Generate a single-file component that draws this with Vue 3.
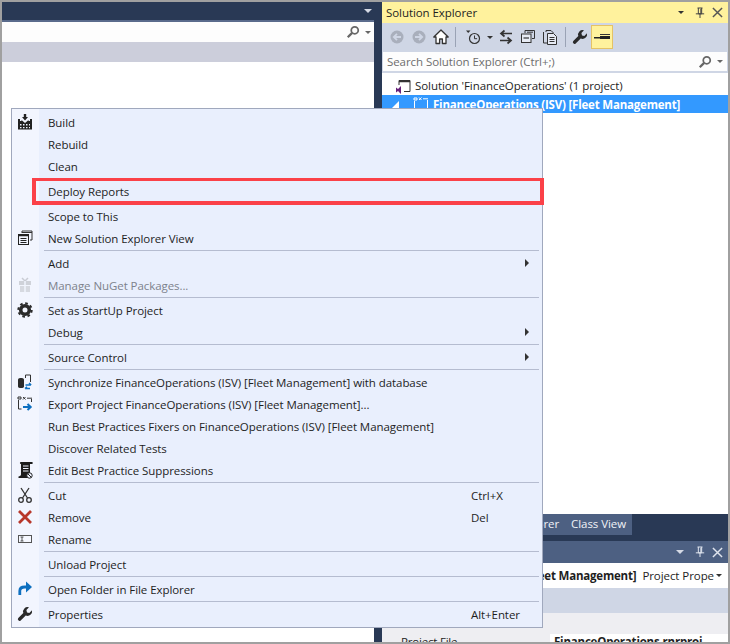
<template>
  <div class="page">
    <div class="left-pane">
      <div class="doc-bar"><span class="tri light"></span></div>
      <div class="doc-search">
        <svg class="glass" viewBox="0 0 16 16"><circle cx="10" cy="6" r="4" fill="none" stroke="#666" stroke-width="2" /><path d="M7 9l-5 5" stroke="#666" stroke-width="2.6" /></svg>
        <span class="tri"></span>
      </div>
      <div class="doc-strip"></div>
      <div class="doc-body"></div>
    </div>

    <div class="right-pane">
      <div class="title-bar">
        <span class="title-text">Solution Explorer</span>
        <span class="tri dark"></span>
        <svg class="pin" viewBox="0 0 12 14"><path d="M3 1h6M4 1v7h4V1M1 8h10M6 8v5M7 2v6" fill="none" stroke="#444" stroke-width="1.2" /></svg>
        <svg class="close" viewBox="0 0 12 12"><path d="M1 1l10 10M11 1L1 11" stroke="#555" stroke-width="1.6" /></svg>
      </div>

      <div class="toolbar">
        <span class="tool">
          <svg viewBox="0 0 16 16"><circle cx="8" cy="8" r="6.5" fill="#a9afbc" /><path d="M12 8H5M8 4.8L4.8 8 8 11.2" fill="none" stroke="#cfd6e5" stroke-width="1.8" /></svg>
        </span>
        <span class="tool">
          <svg viewBox="0 0 16 16"><circle cx="8" cy="8" r="6.5" fill="#a9afbc" /><path d="M4 8h7M8 4.8L11.2 8 8 11.2" fill="none" stroke="#cfd6e5" stroke-width="1.8" /></svg>
        </span>
        <span class="tool">
          <svg viewBox="0 0 16 16"><path d="M8 1L0.8 8h2.2v6.5h3.6v-4.5h2.8v4.5H13V8h2.2z" fill="#fff" stroke="#333" stroke-width="1.3" stroke-linejoin="round" /></svg>
        </span>
        <span class="tool-sep first"></span>
        <span class="tool">
          <svg viewBox="0 0 16 16"><circle cx="9.5" cy="9.5" r="5" fill="none" stroke="#333" stroke-width="1.2" /><path d="M9.5 6.5v3.2h2.6" fill="none" stroke="#333" /><path d="M1 1.5h4.5L3.2 4z" fill="#333" /></svg>
        </span>
        <span class="tool small"><span class="tri dark"></span></span>
        <span class="tool">
          <svg viewBox="0 0 16 16"><path d="M14 4.5H4M6.5 1.5L3 4.5l3.5 3M2 11.5h10M9.5 8.500l3.500 3-3.500 3" fill="none" stroke="#333" stroke-width="1.7" /></svg>
        </span>
        <span class="tool">
          <svg viewBox="0 0 16 16"><path d="M5 4V1.500h9.500v8H12M7 3.200h6" fill="none" stroke="#333" /><rect x="1.500" y="5" width="9.500" height="8.500" fill="#e7ebf4" stroke="#333" /><path d="M3.500 9h5.500" stroke="#333" stroke-width="1.200" /></svg>
        </span>
        <span class="tool">
          <svg viewBox="0 0 16 16"><path d="M4 3V1.500h5l2.500 2.500" fill="none" stroke="#333" /><path d="M1.500 3v11h4" fill="none" stroke="#333" /><path d="M5.500 4.500h6l3 3v8h-9z" fill="#e7ebf4" stroke="#333" /><path d="M7.500 8.500h5M7.500 10.500h5M7.500 12.500h5" stroke="#333" /></svg>
        </span>
        <span class="tool-sep second"></span>
        <span class="tool">
          <svg viewBox="0 0 16 16"><path d="M15 4.300l-2.700 2.700-2.300-.6-.6-2.300L12 1.300a4.500 4.500 0 0 0-5.700 5.700L1.300 12a1.700 1.700 0 0 0 2.400 2.400l5-5A4.500 4.500 0 0 0 15 4.300z" fill="#2a2a2a" /></svg>
        </span>
        <span class="tool toggled">
          <svg viewBox="0 0 16 16"><rect x="6" y="5" width="10" height="1" fill="#333" /><rect x="6" y="7" width="10" height="3" fill="#222" /><rect x="0" y="8" width="6" height="1.500" fill="#222" /></svg>
        </span>
      </div>

      <div class="search-wrap">
        <div class="search-box">
          <span class="placeholder">Search Solution Explorer (Ctrl+;)</span>
          <svg class="glass" viewBox="0 0 16 16"><circle cx="10" cy="6" r="4" fill="none" stroke="#666" stroke-width="2" /><path d="M7 9l-5 5" stroke="#666" stroke-width="2.600" /></svg>
          <span class="tri"></span>
        </div>
      </div>

      <div class="tree">
        <div class="tree-row solution">
          <svg viewBox="0 0 16 16"><path d="M4 7V2.500h11v11H9" fill="none" stroke="#333" /><path d="M4 3.500h11" stroke="#333" stroke-width="1.500" /><path d="M1 9.500l2 1.500 3-3v8l-3-3-2 1.500z" fill="#68217a" /></svg>
          <span>Solution 'FinanceOperations' (1 project)</span>
        </div>
        <div class="tree-row project">
          <span class="expander"></span>
          <svg viewBox="0 0 16 16"><path d="M1.500 5v10h13V4" fill="none" stroke="#fff" /><path d="M1 2h3v2H1zM6 1.500l2.500 2.500M8.500 1.500L6 4M10 2.800h5" fill="none" stroke="#fff" /></svg>
          <span>FinanceOperations (ISV) [Fleet Management]</span>
        </div>
      </div>

      <div class="tab-strip">
        <span class="tab explorer">Team Explorer</span>
        <span class="tab">Class View</span>
      </div>

      <div class="props">
        <div class="props-title">
          <span class="tri light"></span>
          <svg class="pin" viewBox="0 0 12 14"><path d="M3 1h6M4 1v7h4V1M1 8h10M6 8v5M7 2v6" fill="none" stroke="#dfe4ee" stroke-width="1.200" /></svg>
          <svg class="close" viewBox="0 0 12 12"><path d="M1 1l10 10M11 1L1 11" stroke="#dfe4ee" stroke-width="1.600" /></svg>
        </div>
        <div class="props-select">
          <b>FinanceOperations (ISV) [Fleet Management]</b>
          <span class="kind">Project Prope</span>
          <span class="tri dark"></span>
        </div>
        <div class="props-strip"></div>
        <div class="props-grid">
          <span class="prop-name">Project File</span>
          <span class="prop-value">FinanceOperations.rnrproj</span>
        </div>
      </div>
    </div>

    <div class="menu">
      <template v-for="(item, key) in menuItems" :key="key">
        <div v-if="item.sep" class="sep"></div>
        <div v-else class="item" :class="{ disabled: item.disabled }">
          <span class="gutter">
            <svg v-if="item.icon === 'build'" viewBox="0 0 16 16"><path d="M6.800 0h2.400v3H11L8 6.500 5 3h1.800z" fill="#222" /><path d="M1 5h2v2h1.500v-1L8 9l3.500-3v1H13V5h2v10.500H1z" fill="#222" /><path d="M3 10h1.500v1.500H3zM6 10h1.500v1.500H6zM9 10h1.500v1.500H9zM12 10h1v1.500h-1zM3 13h1.500v1.300H3zM6 13h1.500v1.300H6zM9 13h1.500v1.300H9zM12 13h1v1.300h-1z" fill="#eef2fe" /></svg>
            <svg v-else-if="item.icon === 'views'" viewBox="0 0 16 16"><path d="M5 3V1h10v9h-2" fill="none" stroke="#333" /><path d="M5 2.500h10" stroke="#333" /><rect x="1.500" y="4.500" width="10" height="10" fill="#f2f5fe" stroke="#222" /><path d="M1.500 5.500h10" stroke="#222" stroke-width="1.500" /><path d="M3.500 8.500h6M3.500 10.500h6M3.500 12.500h6" stroke="#222" /></svg>
            <svg v-else-if="item.icon === 'gift'" viewBox="0 0 16 16"><path d="M5 1l3 3 3-3" fill="none" stroke="#c9ccd3" stroke-width="1.500" /><rect x="2" y="4" width="12" height="4" fill="#cfd2d9" /><rect x="3" y="9" width="10" height="6" fill="#d6d9e0" /><path d="M8 4v11" stroke="#f1f4fe" stroke-width="1.500" /></svg>
            <svg v-else-if="item.icon === 'gear'" viewBox="0 0 16 16"><circle cx="8" cy="8" r="4.300" fill="none" stroke="#2a2a2a" stroke-width="3.600" /><circle cx="8" cy="8" r="6.700" fill="none" stroke="#2a2a2a" stroke-width="2" stroke-dasharray="2.630 2.630" /></svg>
            <svg v-else-if="item.icon === 'sync'" viewBox="0 0 16 16"><path d="M1 5.500c0-2 6-2 6 0v7c0 2-6 2-6 0z" fill="#2a2a2a" /><path d="M8.500 4V1h5v7" fill="none" stroke="#333" /><path d="M8.500 11H14M12 9l2.200 2M8 14.500h5M10 12.800l-2 1.700" fill="none" stroke="#0e70c0" stroke-width="1.400" /></svg>
            <svg v-else-if="item.icon === 'export'" viewBox="0 0 16 16"><path d="M1.500 4v9h3M1 1h3v2H1z" fill="none" stroke="#333" /><path d="M6 1l2.500 2.500M8.500 1L6 3.500M10 2.200h5M14.500 3v3" fill="none" stroke="#333" /><path d="M6 11h7M10.500 8l3.200 3-3.200 3" fill="none" stroke="#0e70c0" stroke-width="2" /></svg>
            <svg v-else-if="item.icon === 'scroll'" class="tall" viewBox="0 0 16 18"><path d="M4 1c-1.500 0-1.500 2 0 2v10.500c0 1-1 1.500-3 2.500l1 1h9v-3h2V3h2c1 0 1-2 0-2z" fill="#1c1c1c" /><path d="M6 5h5.500M6 7.500h5.500M6 10h5.500" stroke="#eef2fe" /><circle cx="12.500" cy="14.500" r="2.700" fill="#eef2fe" stroke="#222" /><path d="M10.800 12.800l3.400 3.400" stroke="#222" /></svg>
            <svg v-else-if="item.icon === 'cut'" viewBox="0 0 16 16"><path d="M4 1l6.500 10M12 1L5.500 11" fill="none" stroke="#333" stroke-width="1.300" /><circle cx="4" cy="13" r="2.300" fill="none" stroke="#333" stroke-width="1.300" /><circle cx="12" cy="13" r="2.300" fill="none" stroke="#333" stroke-width="1.300" /></svg>
            <svg v-else-if="item.icon === 'remove'" viewBox="0 0 16 16"><path d="M2 2l12 12M14 2L2 14" stroke="#b8372a" stroke-width="2.800" /></svg>
            <svg v-else-if="item.icon === 'rename'" viewBox="0 0 16 16"><rect x="1.500" y="4.500" width="13" height="7" fill="#f6f8ff" stroke="#555" /><path d="M3.500 6h3M3.500 10h3M5 6v4" stroke="#333" stroke-width=".8" /></svg>
            <svg v-else-if="item.icon === 'open'" viewBox="0 0 16 16"><path d="M2.800 14v-4c0-2.500 2-4 5-4h3" fill="none" stroke="#0e70c0" stroke-width="2.800" /><path d="M9 0.500L15 6 9 11.500z" fill="#0e70c0" /></svg>
            <svg v-else-if="item.icon === 'wrench'" viewBox="0 0 16 16"><path d="M15 4.300l-2.700 2.700-2.300-.6-.6-2.300L12 1.300a4.500 4.500 0 0 0-5.700 5.700L1.300 12a1.700 1.700 0 0 0 2.400 2.400l5-5A4.500 4.500 0 0 0 15 4.300z" fill="#2a2a2a" /></svg>
          </span>
          <span class="label">{{ item.label }}</span>
          <span class="shortcut">{{ item.shortcut }}</span>
          <span class="sub"><i v-if="item.sub"></i></span>
          <span v-if="item.marked" class="marker"></span>
        </div>
      </template>
    </div>
  </div>
</template>

<script setup>
const project = "FinanceOperations (ISV) [Fleet Management]";

const menuItems = [
  { label: "Build", icon: "build" },
  { label: "Rebuild" },
  { label: "Clean" },
  { sep: true },
  { label: "Deploy Reports", marked: true },
  { sep: true },
  { label: "Scope to This" },
  { label: "New Solution Explorer View", icon: "views" },
  { sep: true },
  { label: "Add", sub: true },
  { label: "Manage NuGet Packages...", icon: "gift", disabled: true },
  { sep: true },
  { label: "Set as StartUp Project", icon: "gear" },
  { label: "Debug", sub: true },
  { sep: true },
  { label: "Source Control", sub: true },
  { sep: true },
  { label: `Synchronize ${project} with database`, icon: "sync" },
  { label: `Export Project ${project}...`, icon: "export" },
  { label: `Run Best Practices Fixers on ${project}` },
  { label: "Discover Related Tests" },
  { label: "Edit Best Practice Suppressions", icon: "scroll" },
  { sep: true },
  { label: "Cut", icon: "cut", shortcut: "Ctrl+X" },
  { label: "Remove", icon: "remove", shortcut: "Del" },
  { label: "Rename", icon: "rename" },
  { sep: true },
  { label: "Unload Project" },
  { sep: true },
  { label: "Open Folder in File Explorer", icon: "open" },
  { sep: true },
  { label: "Properties", icon: "wrench", shortcut: "Alt+Enter" },
];
</script>

<style>
html,
body {
  margin: 0;
}
</style>

<style scoped>
.page {
  position: relative;
  display: flex;
  box-sizing: border-box;
  width: 730px;
  height: 644px;
  overflow: hidden;
  border: 2px solid #a0a0a0;
  background: #293955;
  font-family: "Open Sans", "Liberation Sans", sans-serif;
  font-size: 11.5px;
  letter-spacing: -0.07px;
  color: #1e1e1e;
}

svg {
  display: block;
  width: 16px;
  height: 16px;
  flex: none;
}
svg.tall {
  height: 18px;
}

.tri {
  display: block;
  width: 0;
  height: 0;
  flex: none;
  border-style: solid;
  border-width: 3px 3.5px 0;
  border-color: #666 transparent transparent;
}
.tri.light {
  border-width: 4px 4.5px 0;
  border-top-color: #d5dae5;
}
.tri.dark {
  border-top-color: #333;
}

.left-pane {
  display: flex;
  flex-direction: column;
  width: 372px;
  flex: none;
}
.doc-bar {
  display: flex;
  align-items: center;
  justify-content: flex-end;
  height: 18px;
  flex: none;
  padding-right: 2px;
}
.doc-search {
  display: flex;
  align-items: center;
  justify-content: flex-end;
  gap: 5px;
  box-sizing: border-box;
  height: 22px;
  flex: none;
  padding-right: 3px;
  border-top: 2px solid #5a6b8c;
  background: #fdfdfd;
}
.glass {
  width: 14px;
  height: 14px;
}
.doc-strip {
  height: 20px;
  flex: none;
  background: #cccedb;
}
.doc-body {
  flex: 1;
  background: #fff;
}

.right-pane {
  display: flex;
  flex-direction: column;
  margin-left: 8px;
  flex: 1;
  min-width: 0;
}
.title-bar {
  display: flex;
  align-items: center;
  height: 21px;
  flex: none;
  padding: 0 5px 0 4px;
  background: #fff29d;
}
.title-text {
  flex: 1;
}
.pin {
  width: 10px;
  height: 12px;
  margin: 0 7px 0 11px;
}
.close {
  width: 11px;
  height: 11px;
}

.toolbar {
  display: flex;
  align-items: center;
  height: 28px;
  flex: none;
  padding-left: 4px;
  background: #cfd6e5;
}
.tool {
  display: flex;
  align-items: center;
  justify-content: center;
  box-sizing: border-box;
  width: 22px;
  height: 24px;
  flex: none;
}
.tool.small {
  width: 11px;
}
.tool.toggled {
  border: 1px solid #e5c365;
  background: #fff29d;
}
.tool-sep {
  width: 1px;
  height: 20px;
  flex: none;
  background: #9aa3b5;
}
.tool-sep.first {
  margin: 0 6px 0 3px;
}
.tool-sep.second {
  margin: 0 3px 0 4px;
}

.search-wrap {
  flex: none;
  padding: 1px 1px 2px;
  background: #cfd6e5;
}
.search-box {
  display: flex;
  align-items: center;
  gap: 5px;
  height: 19px;
  padding: 0 4px;
  background: #fdfdfd;
}
.placeholder {
  flex: 1;
  color: #6d6d6d;
}

.tree {
  flex: 1;
  padding-top: 4px;
  background: #fff;
}
.tree-row {
  display: flex;
  align-items: center;
  height: 18px;
}
.solution {
  gap: 4px;
  padding: 0 0 1px 13px;
  box-sizing: border-box;
}
.project {
  gap: 4px;
  padding-left: 10px;
  background: #3399ff;
  color: #fff;
  font-weight: 700;
  letter-spacing: -0.2px;
}
.expander {
  width: 0;
  height: 0;
  margin-right: 10px;
  border-style: solid;
  border-width: 0 0 7px 7px;
  border-color: transparent transparent #fff;
}

.tab-strip {
  display: flex;
  justify-content: flex-end;
  align-items: flex-start;
  height: 27px;
  flex: none;
  padding-right: 96px;
  color: #f0f2f7;
}
.tab {
  display: block;
  height: 21px;
  padding: 0 6px;
  line-height: 20px;
  background: #4d6082;
}

.props {
  display: flex;
  flex-direction: column;
  height: 101px;
  flex: none;
  overflow: hidden;
  background: #eeeef2;
}
.props-title {
  display: flex;
  align-items: center;
  justify-content: flex-end;
  height: 22px;
  flex: none;
  padding-right: 5px;
  background: #4d6082;
}
.props-select {
  display: flex;
  align-items: center;
  justify-content: flex-end;
  gap: 6px;
  height: 25px;
  flex: none;
  padding-right: 6px;
  background: #fff;
  white-space: nowrap;
}
.props-select b {
  letter-spacing: -0.2px;
}
.props-select .tri {
  margin-left: -4px;
}
.props-strip {
  height: 25px;
  flex: none;
  background: #cfd6e5;
}
.props-grid {
  display: flex;
  margin-top: 21px;
  padding-left: 19px;
  font-weight: 700;
  letter-spacing: -0.2px;
}
.prop-name {
  width: 149px;
  font-weight: 400;
}
.prop-value {
  flex: 1;
  padding-left: 4px;
  background: #fff;
}

.menu {
  position: absolute;
  top: 106px;
  left: 9px;
  box-sizing: border-box;
  width: 532px;
  height: 520px;
  padding: 2px 0;
  border: 1px solid #a0a8bd;
  background: linear-gradient(to right, #f2f5fe 27px, #e9effd 27px);
}
.item {
  position: relative;
  display: grid;
  grid-template-columns: 27px 432px 54px 17px;
  align-items: center;
  height: 22px;
  white-space: nowrap;
}
.gutter {
  display: flex;
  justify-content: center;
  padding-right: 1px;
}
.label {
  padding-left: 9px;
}
.disabled .label {
  color: #7d828c;
}
.sub i {
  display: block;
  width: 0;
  height: 0;
  border-style: solid;
  border-width: 4px 0 4px 4px;
  border-color: transparent transparent transparent #333;
}
.sep {
  height: 1px;
  margin: 1px 3px 1px 32px;
  background: #b5bcd0;
}
.marker {
  position: absolute;
  top: -2px;
  left: 20px;
  right: -2px;
  bottom: -3px;
  border: 4px solid #fb4148;
  border-top-width: 3px;
}
</style>
